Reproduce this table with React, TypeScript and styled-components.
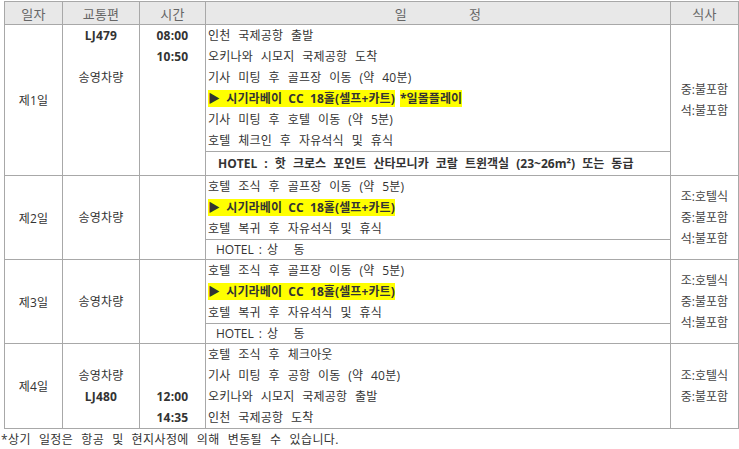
import styled, { createGlobalStyle } from "styled-components"

const GlobalStyle = createGlobalStyle`
    body {
        margin: 0;
        background: #fff;
        font-family: "Open Sans", "Noto Sans CJK KR", sans-serif;
        color: #333;
    }
`

const Page = styled.div`
    padding: 1px 6px 0 4px;
    width: 739px;
    box-sizing: border-box;
    letter-spacing: 0.2px;
    word-spacing: 4.5px;
`

const Table = styled.table`
    border-collapse: collapse;
    table-layout: fixed;
    width: 729px;
    font-size: 12px;
`

const HeadCell = styled.th<{w: number}>`
    width: ${props => props.w}px;
    height: 22px;
    padding: 0;
    background: #e8e8e8;
    color: #666;
    font-weight: normal;
    font-size: 13px;
    border: 1px solid #a8a8a8;
    text-align: center;
`

const Cell = styled.td<{align?: 'top' | 'middle'}>`
    padding: 0;
    border: 1px solid #a8a8a8;
    text-align: center;
    vertical-align: ${props => props.align ?? 'middle'};
`

const Lines = styled.div`
    display: flex;
    flex-direction: column;
`

const Line = styled.div<{bold?: boolean}>`
    height: 21px;
    line-height: 21px;
    font-weight: ${props => props.bold ? 'bold' : 'normal'};
    white-space: nowrap;
`

const ScheduleLine = styled(Line)`
    text-align: left;
    padding-left: 2px;
`

const HotelLine = styled.div<{bold?: boolean}>`
    border-top: 1px solid #a8a8a8;
    height: ${props => props.bold ? 23 : 19}px;
    line-height: ${props => props.bold ? 23 : 19}px;
    text-align: left;
    padding-left: ${props => props.bold ? 12 : 10}px;
    font-weight: ${props => props.bold ? 'bold' : 'normal'};
    letter-spacing: 0;
    word-spacing: ${props => props.bold ? 4 : 2}px;
    white-space: pre;
`

const Mark = styled.span`
    background: #ffff00;
    font-weight: bold;
    letter-spacing: 0.1px;
    word-spacing: 3px;
`

const SunsetMark = styled(Mark)`
    margin-left: 5px;
`

const Meal = styled.div`
    line-height: 21px;
    color: #444;
    letter-spacing: 0;
`

const Spread = styled.span`
    display: inline-flex;
    gap: 62px;
`

const Note = styled.div`
    margin-left: -3px;
    padding-top: 1px;
    font-size: 12px;
    letter-spacing: 0.4px;
    color: #333;
`

type Day = {
    day: string
    transport: string[]
    times: string[]
    transportAlign: 'top' | 'middle'
    schedule: { text: string, golf?: boolean, sunset?: boolean }[]
    hotel?: { text: string, bold: boolean }
    meals: string[]
}

const golf = '▶ 시기라베이 CC 18홀(셀프+카트)'

const days: Day[] = [
    {
        day: '제1일',
        transport: ['LJ479', '', '송영차량'],
        times: ['08:00', '10:50'],
        transportAlign: 'top',
        schedule: [
            { text: '인천 국제공항 출발' },
            { text: '오키나와 시모지 국제공항 도착' },
            { text: '기사 미팅 후 골프장 이동 (약 40분)' },
            { text: golf, golf: true, sunset: true },
            { text: '기사 미팅 후 호텔 이동 (약 5분)' },
            { text: '호텔 체크인 후 자유석식 및 휴식' },
        ],
        hotel: { text: 'HOTEL : 핫 크로스 포인트 산타모니카 코랄 트윈객실 (23~26m²) 또는 동급', bold: true },
        meals: ['중:불포함', '석:불포함'],
    },
    {
        day: '제2일',
        transport: ['송영차량'],
        times: [],
        transportAlign: 'middle',
        schedule: [
            { text: '호텔 조식 후 골프장 이동 (약 5분)' },
            { text: golf, golf: true },
            { text: '호텔 복귀 후 자유석식 및 휴식' },
        ],
        hotel: { text: 'HOTEL : 상   동', bold: false },
        meals: ['조:호텔식', '중:불포함', '석:불포함'],
    },
    {
        day: '제3일',
        transport: ['송영차량'],
        times: [],
        transportAlign: 'middle',
        schedule: [
            { text: '호텔 조식 후 골프장 이동 (약 5분)' },
            { text: golf, golf: true },
            { text: '호텔 복귀 후 자유석식 및 휴식' },
        ],
        hotel: { text: 'HOTEL : 상   동', bold: false },
        meals: ['조:호텔식', '중:불포함', '석:불포함'],
    },
    {
        day: '제4일',
        transport: ['', '송영차량', 'LJ480'],
        times: ['', '', '12:00', '14:35'],
        transportAlign: 'top',
        schedule: [
            { text: '호텔 조식 후 체크아웃' },
            { text: '기사 미팅 후 공항 이동 (약 40분)' },
            { text: '오키나와 시모지 국제공항 출발' },
            { text: '인천 국제공항 도착' },
        ],
        meals: ['조:호텔식', '중:불포함'],
    },
]

const isCode = (s: string) => /^[A-Z0-9:]+$/.test(s)

export default function App() {
    return (
        <Page>
            <GlobalStyle />
            <Table>
                <thead>
                    <tr>
                        <HeadCell w={57}>일자</HeadCell>
                        <HeadCell w={76}>교통편</HeadCell>
                        <HeadCell w={65}>시간</HeadCell>
                        <HeadCell w={464}><Spread><span>일</span><span>정</span></Spread></HeadCell>
                        <HeadCell w={67}>식사</HeadCell>
                    </tr>
                </thead>
                <tbody>
                    {days.map(d => (
                        <tr key={d.day}>
                            <Cell>{d.day}</Cell>
                            <Cell align={d.transportAlign}>
                                <Lines>
                                    {d.transport.map((t, i) => (
                                        <Line key={i} bold={isCode(t)}>{t}</Line>
                                    ))}
                                </Lines>
                            </Cell>
                            <Cell align="top">
                                <Lines>
                                    {d.times.map((t, i) => (
                                        <Line key={i} bold>{t}</Line>
                                    ))}
                                </Lines>
                            </Cell>
                            <Cell align="top">
                                <Lines>
                                    {d.schedule.map((s, i) => (
                                        <ScheduleLine key={i}>
                                            {s.golf ? <Mark>{s.text}</Mark> : s.text}
                                            {s.sunset ? <SunsetMark>*일몰플레이</SunsetMark> : null}
                                        </ScheduleLine>
                                    ))}
                                    {d.hotel ? <HotelLine bold={d.hotel.bold}>{d.hotel.text}</HotelLine> : null}
                                </Lines>
                            </Cell>
                            <Cell>
                                {d.meals.map(m => <Meal key={m}>{m}</Meal>)}
                            </Cell>
                        </tr>
                    ))}
                </tbody>
            </Table>
            <Note>*상기 일정은 항공 및 현지사정에 의해 변동될 수 있습니다.</Note>
        </Page>
    )
}
